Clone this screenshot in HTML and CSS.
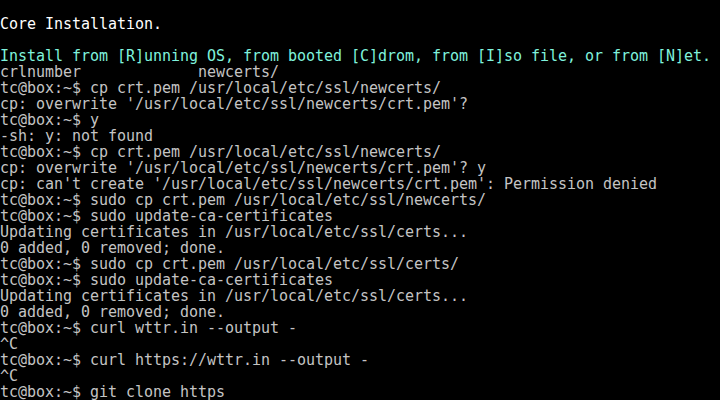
FILE: index.html
```html
<!DOCTYPE html>
<html>
<head>
<meta charset="utf-8">
<link rel="stylesheet" href="styles.css">
</head>
<body>
<div class="screen">
<div class="line"></div>
<div class="line bright">Core Installation.</div>
<div class="line"></div>
<div class="line cyan">Install from [R]unning OS, from booted [C]drom, from [I]so file, or from [N]et.</div>
<div class="line">crlnumber             newcerts/</div>
<div class="line">tc@box:~$ cp crt.pem /usr/local/etc/ssl/newcerts/</div>
<div class="line">cp: overwrite '/usr/local/etc/ssl/newcerts/crt.pem'?</div>
<div class="line">tc@box:~$ y</div>
<div class="line">-sh: y: not found</div>
<div class="line">tc@box:~$ cp crt.pem /usr/local/etc/ssl/newcerts/</div>
<div class="line">cp: overwrite '/usr/local/etc/ssl/newcerts/crt.pem'? y</div>
<div class="line">cp: can't create '/usr/local/etc/ssl/newcerts/crt.pem': Permission denied</div>
<div class="line">tc@box:~$ sudo cp crt.pem /usr/local/etc/ssl/newcerts/</div>
<div class="line">tc@box:~$ sudo update-ca-certificates</div>
<div class="line">Updating certificates in /usr/local/etc/ssl/certs...</div>
<div class="line">0 added, 0 removed; done.</div>
<div class="line">tc@box:~$ sudo cp crt.pem /usr/local/etc/ssl/certs/</div>
<div class="line">tc@box:~$ sudo update-ca-certificates</div>
<div class="line">Updating certificates in /usr/local/etc/ssl/certs...</div>
<div class="line">0 added, 0 removed; done.</div>
<div class="line">tc@box:~$ curl wttr.in --output -</div>
<div class="line">^C</div>
<div class="line">tc@box:~$ curl https://wttr.in --output -</div>
<div class="line">^C</div>
<div class="line">tc@box:~$ git clone https</div>
</div>
</body>
</html>
```
FILE: styles.css
```css
html, body {
  margin: 0;
  padding: 0;
  background: #000;
  width: 720px;
  height: 400px;
  overflow: hidden;
}
.screen {
  display: flex;
  flex-direction: column;
  font-family: "DejaVu Sans Mono", "Liberation Mono", monospace;
  font-size: 15px;
  letter-spacing: -0.03px;
  line-height: 16px;
  color: #c4c4c4;
}
.line {
  height: 16px;
  white-space: pre;
}
.bright {
  color: #ffffff;
}
.cyan {
  color: #7ff2dc;
}
```
